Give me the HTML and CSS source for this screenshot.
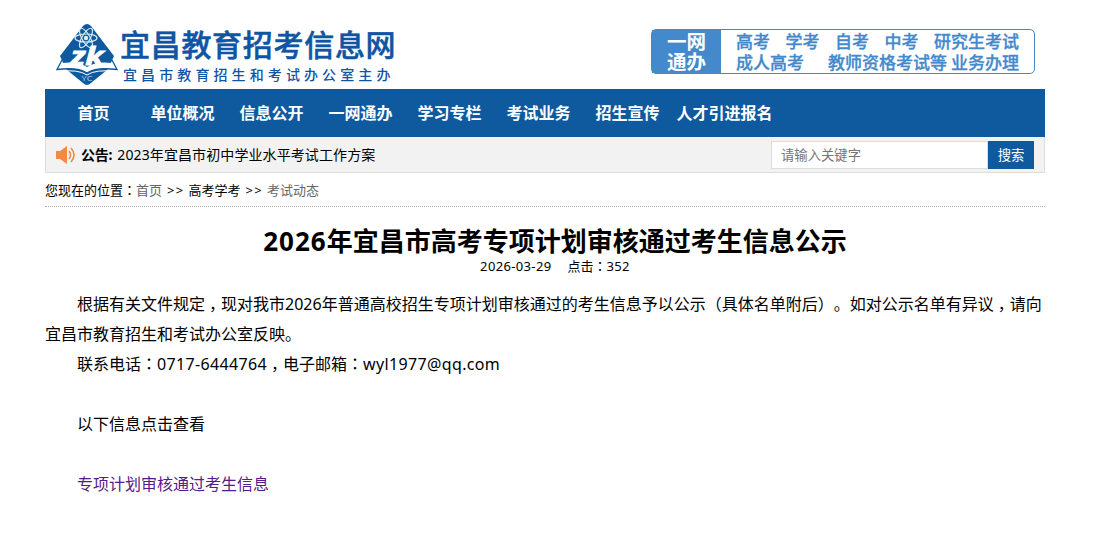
FILE: index.html
```html
<!DOCTYPE html>
<html lang="zh-CN">

<head>
    <meta charset="UTF-8">
    <meta name="viewport" content="width=device-width, initial-scale=1.0">
    <title>2026年宜昌市高考专项计划审核通过考生信息公示</title>
    <link rel="stylesheet" href="styles.css">
</head>

<body>
    <div class="wrap">
        <header class="header">
            <a class="logo" href="#">
                <svg class="logo-mark" width="64" height="64" viewBox="0 0 64 64">
                    <path fill="#0f5a9f" d="M28 4Q32 0 36 4L59 34L55 43L52 48L36 61Q32 65 28 61L12 48L9 43L5 34Z" />
                    <path fill="#fff" d="M7 41Q23 39 32 45Q41 39 57 41L62 47Q41 45 32 51Q23 45 2 47Z" />
                    <path fill="none" stroke="#0f5a9f" stroke-width="1.3" d="M7 38L2 47.500Q23 45 32 51Q41 45 62 47.500L57 38" />
                    <path fill="none" stroke="#fff" stroke-width="1" d="M4 49.500Q23 47 32 53Q41 47 60 49.500" />
                    <g fill="none" stroke="#d9ebf8" stroke-width="1.2">
                        <ellipse cx="31" cy="16" rx="11" ry="4" />
                        <ellipse cx="31" cy="16" rx="11" ry="4" transform="rotate(60 31 16)" />
                        <ellipse cx="31" cy="16" rx="11" ry="4" transform="rotate(120 31 16)" />
                    </g>
                    <circle cx="31" cy="16" r="2.2" fill="#d9ebf8" />
                    <text class="logo-zk" x="32" y="43" textLength="33" lengthAdjust="spacingAndGlyphs" text-anchor="middle">zk</text>
                    <text class="logo-yc" x="32" y="59" textLength="11" lengthAdjust="spacingAndGlyphs" text-anchor="middle">YC</text>
                </svg>
                <span class="logo-text">
                    <strong>宜昌教育招考信息网</strong>
                    <em>宜昌市教育招生和考试办公室主办</em>
                </span>
            </a>
            <div class="service">
                <div class="service-name">一网<br>通办</div>
                <div class="service-list">
                    <p><span>高考</span><span>学考</span><span>自考</span><span>中考</span><span>研究生考试</span></p>
                    <p><span>成人高考</span><span class="teacher">教师资格考试等</span><span>业务办理</span></p>
                </div>
            </div>
        </header>

        <ul class="nav">
            <li>首页</li>
            <li>单位概况</li>
            <li>信息公开</li>
            <li>一网通办</li>
            <li>学习专栏</li>
            <li>考试业务</li>
            <li>招生宣传</li>
            <li class="wide">人才引进报名</li>
        </ul>

        <div class="notice">
            <svg class="horn" width="20" height="18" viewBox="0 0 20 18">
                <path fill="#f28a45" d="M0 5H4L11 0V18L4 13H0Z" />
                <path fill="none" stroke="#f28a45" stroke-width="1.6" d="M13 5Q16 9 13 13M15 2Q21 9 15 16" />
            </svg>
            <b>公告:</b>
            <a class="notice-link" href="#">2023年宜昌市初中学业水平考试工作方案</a>
            <form class="search">
                <input type="text" placeholder="请输入关键字">
                <button type="button">搜索</button>
            </form>
        </div>

        <div class="crumbs">您现在的位置<i lang="ja">：</i><a href="#">首页</a><span class="sep">&gt;&gt;</span>高考学考<span class="sep">&gt;&gt;</span><a href="#">考试动态</a></div>

        <div class="article">
            <h1><span>2026</span>年宜昌市高考专项计划审核通过考生信息公示</h1>
            <div class="info"><span class="num">2026-03-29</span><span class="hits">点击<i lang="ja">：</i><span class="num">352</span></span></div>
            <div class="content">
                <p>根据有关文件规定<i class="comma">，</i>现对我市2026年普通高校招生专项计划审核通过的考生信息予以公示（具体名单附后）。如对公示名单有异议<i class="comma">，</i>请向宜昌市教育招生和考试办公室反映。</p>
                <p>联系电话<i lang="ja">：</i><span class="num">0717-6444764</span><i class="comma">，</i>电子邮箱<i lang="ja">：</i><span class="num">wyl1977@qq.com</span></p>
                <p>&nbsp;</p>
                <p>以下信息点击查看</p>
                <p>&nbsp;</p>
                <p><a href="#">专项计划审核通过考生信息</a></p>
            </div>
        </div>
    </div>
</body>

</html>
```
FILE: styles.css
```css
* {
    box-sizing: border-box;
    margin: 0;
    padding: 0;
}

body {
    background: #fff;
    color: #000;
    font: 13px "Noto Sans", "Noto Sans CJK SC", sans-serif;
    text-spacing-trim: space-all;
}

a {
    text-decoration: none;
}

/* full width colons sit in the middle of their box */
i {
    font-family: "Noto Sans CJK JP", sans-serif;
    font-style: normal;
    line-height: 1;
}

.comma {
    padding-left: 4px;
    margin-right: -4px;
}

.wrap {
    width: 1000px;
    margin-left: 45px;
}

.header {
    display: flex;
    justify-content: space-between;
    height: 89px;
    padding: 22px 10px 0 10px;
}

.logo {
    display: flex;
    color: #1054a4;
}

.logo-zk {
    fill: #fff;
    stroke: #fff;
    stroke-width: .8px;
    font: italic bold 25px "Open Sans", sans-serif;
}

.logo-yc {
    fill: #b9d8ef;
    font: 8px "Open Sans", sans-serif;
}

.logo-text {
    padding: 3px 0 0 1px;
}

.logo-text strong,
.logo-text em {
    display: block;
    white-space: nowrap;
    font-family: "Noto Sans CJK SC", sans-serif;
    font-style: normal;
}

.logo-text strong {
    font-size: 30px;
    font-weight: 500;
    letter-spacing: .7px;
    line-height: 36px;
    -webkit-text-stroke: .5px #1054a4;
}

.logo-text em {
    padding: 2px 0 0 3px;
    font-size: 14px;
    font-weight: 500;
    letter-spacing: 4.1px;
    line-height: 22px;
}

.service {
    display: flex;
    width: 384px;
    height: 45px;
    margin-top: 7px;
    border: 1px solid #4389cb;
    border-radius: 5px;
    color: #4389cb;
    font-family: "Noto Sans CJK SC", sans-serif;
    font-size: 17px;
    font-weight: bold;
    line-height: 21px;
}

.service-name {
    width: 69px;
    padding-top: 1px;
    background: #4389cb;
    color: #fff;
    font-size: 19.5px;
    line-height: 20px;
    text-align: center;
}

.service-list {
    width: 298px;
    padding: 0 0 0 15px;
}

.service-list p {
    display: flex;
    justify-content: space-between;
    font-weight: 500;
    white-space: nowrap;
    -webkit-text-stroke: .3px #4389cb;
}

.service-list .teacher {
    margin-left: 20px;
}

.nav {
    display: flex;
    height: 48px;
    padding-left: 4px;
    background: #0f5a9f;
    list-style: none;
}

.nav li {
    width: 89px;
    color: #fff;
    font-size: 16px;
    font-weight: bold;
    line-height: 48px;
    text-align: center;
}

.nav .wide {
    width: 105px;
}

.notice {
    display: flex;
    align-items: center;
    height: 36px;
    padding: 0 10px;
    background: #f2f2f2;
    border: 1px solid #ddd;
    border-top: 0;
    font-size: 14px;
}

.notice b {
    margin: 0 5px 0 5px;
    letter-spacing: -.2px;
    line-height: 20px;
}

.notice-link {
    color: #000;
    letter-spacing: .1px;
    line-height: 20px;
}

.search {
    display: flex;
    margin-left: auto;
}

.search input {
    width: 217px;
    height: 28px;
    padding: 0 9px;
    border: 1px solid #ddd;
    background: #fff;
    font: 13.33px "Noto Sans CJK SC", sans-serif;
}

.search button {
    width: 46px;
    height: 28px;
    border: 0;
    background: #0f5a9f;
    color: #fff;
    font: 13.33px "Noto Sans CJK SC", sans-serif;
}

.crumbs {
    height: 34px;
    border-bottom: 1px dotted #aaa;
    line-height: 34px;
}

.crumbs a {
    color: #666;
}

.sep {
    margin: 0 4px 0 5px;
    letter-spacing: 1.3px;
}

.article h1 {
    margin-top: 17px;
    padding-left: 20px;
    font-size: 26px;
    line-height: 34px;
    text-align: center;
}

.article h1 span {
    letter-spacing: 1px;
}

.info {
    padding-left: 20px;
    line-height: 16px;
    text-align: center;
}

.num {
    letter-spacing: .35px;
}

.hits {
    margin-left: 16px;
}

.content {
    margin-top: 15px;
    font-size: 16px;
    line-height: 30px;
}

.content p {
    height: 30px;
    text-indent: 2em;
}

.content p:first-child {
    height: 60px;
}

.content a {
    color: #551a8b;
}
```
